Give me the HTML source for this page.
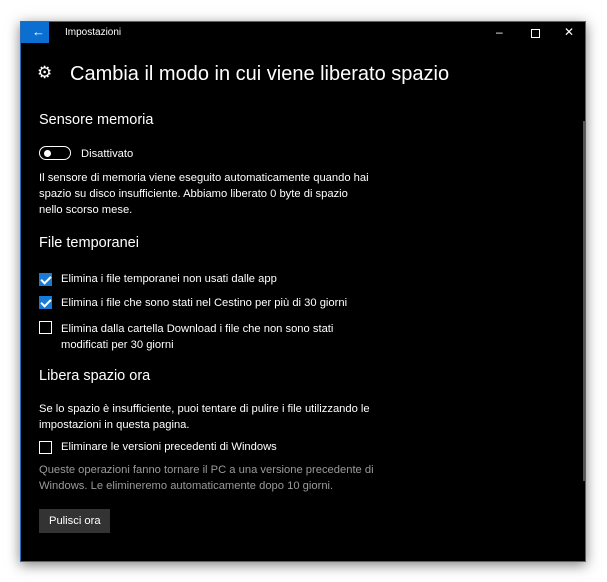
<!DOCTYPE html>
<html><head><style>
body{margin:0;width:607px;height:582px;background:#fff;position:relative;overflow:hidden;font-family:"Liberation Sans",sans-serif;color:#fff}
.win{position:absolute;left:20px;top:21px;width:566px;height:541px;background:#000;border:1px solid #2b6cb8;box-sizing:border-box;box-shadow:0 3px 12px rgba(0,0,0,.5)}
.t{position:absolute;white-space:nowrap}
.cb{position:absolute;left:18px;width:13px;height:13px;box-sizing:border-box;border:1.5px solid #fff}
.cb.on{background:#1a7ad8;border-color:#1a7ad8}
.cb.on:after{content:"";position:absolute;left:3px;top:0px;width:4px;height:8px;border:solid #fff;border-width:0 2px 2px 0;transform:rotate(45deg)}
.s12{font-size:11.2px}
.g{color:#9a9a9a}
</style></head><body>
<div class="win">
 <div style="position:absolute;left:0;top:0;width:28px;height:21px;background:#0a6fd0"></div>
 <div class="t" style="left:11px;top:2px;font-size:13px">←</div>
 <div class="t" style="left:44px;top:5px;font-size:10px">Impostazioni</div>
 <div class="t" style="left:475px;top:3px;font-size:12px">–</div>
 <div style="position:absolute;left:510px;top:7px;width:7px;height:7px;border:1px solid #fff"></div>
 <div class="t" style="left:543px;top:3px;font-size:12px">✕</div>
 <div style="position:absolute;left:562px;top:99px;width:2px;height:360px;background:#555"></div>
 <div class="t" style="left:16px;top:41px;font-size:17px">⚙</div>
 <div class="t" style="left:49px;top:41px;font-size:20px">Cambia il modo in cui viene liberato spazio</div>
 <div class="t" style="left:18px;top:90px;font-size:14.5px">Sensore memoria</div>
 <div style="position:absolute;left:18px;top:124px;width:30px;height:12px;border:1.5px solid #fff;border-radius:8px;box-sizing:content-box"></div>
 <div style="position:absolute;left:23px;top:128px;width:7px;height:7px;border-radius:50%;background:#fff"></div>
 <div class="t s12" style="left:60px;top:126px">Disattivato</div>
 <div class="t s12" style="left:18px;top:148px;line-height:16px">Il sensore di memoria viene eseguito automaticamente quando hai<br>spazio su disco insufficiente. Abbiamo liberato 0 byte di spazio<br>nello scorso mese.</div>
 <div class="t" style="left:18px;top:213px;font-size:14.5px">File temporanei</div>
 <div class="cb on" style="top:251px"></div>
 <div class="t s12" style="left:40px;top:251px">Elimina i file temporanei non usati dalle app</div>
 <div class="cb on" style="top:274px"></div>
 <div class="t s12" style="left:40px;top:275px">Elimina i file che sono stati nel Cestino per più di 30 giorni</div>
 <div class="cb" style="top:299px"></div>
 <div class="t s12" style="left:40px;top:299px;line-height:16px">Elimina dalla cartella Download i file che non sono stati<br>modificati per 30 giorni</div>
 <div class="t" style="left:18px;top:346px;font-size:14.5px">Libera spazio ora</div>
 <div class="t s12" style="left:18px;top:379px;line-height:16px">Se lo spazio è insufficiente, puoi tentare di pulire i file utilizzando le<br>impostazioni in questa pagina.</div>
 <div class="cb" style="top:419px"></div>
 <div class="t s12" style="left:40px;top:419px">Eliminare le versioni precedenti di Windows</div>
 <div class="t s12 g" style="left:18px;top:440px;line-height:16px">Queste operazioni fanno tornare il PC a una versione precedente di<br>Windows. Le elimineremo automaticamente dopo 10 giorni.</div>
 <div style="position:absolute;left:18px;top:487px;width:71px;height:24px;background:#333"></div>
 <div class="t s12" style="left:28px;top:493px">Pulisci ora</div>
</div>
</body></html>
